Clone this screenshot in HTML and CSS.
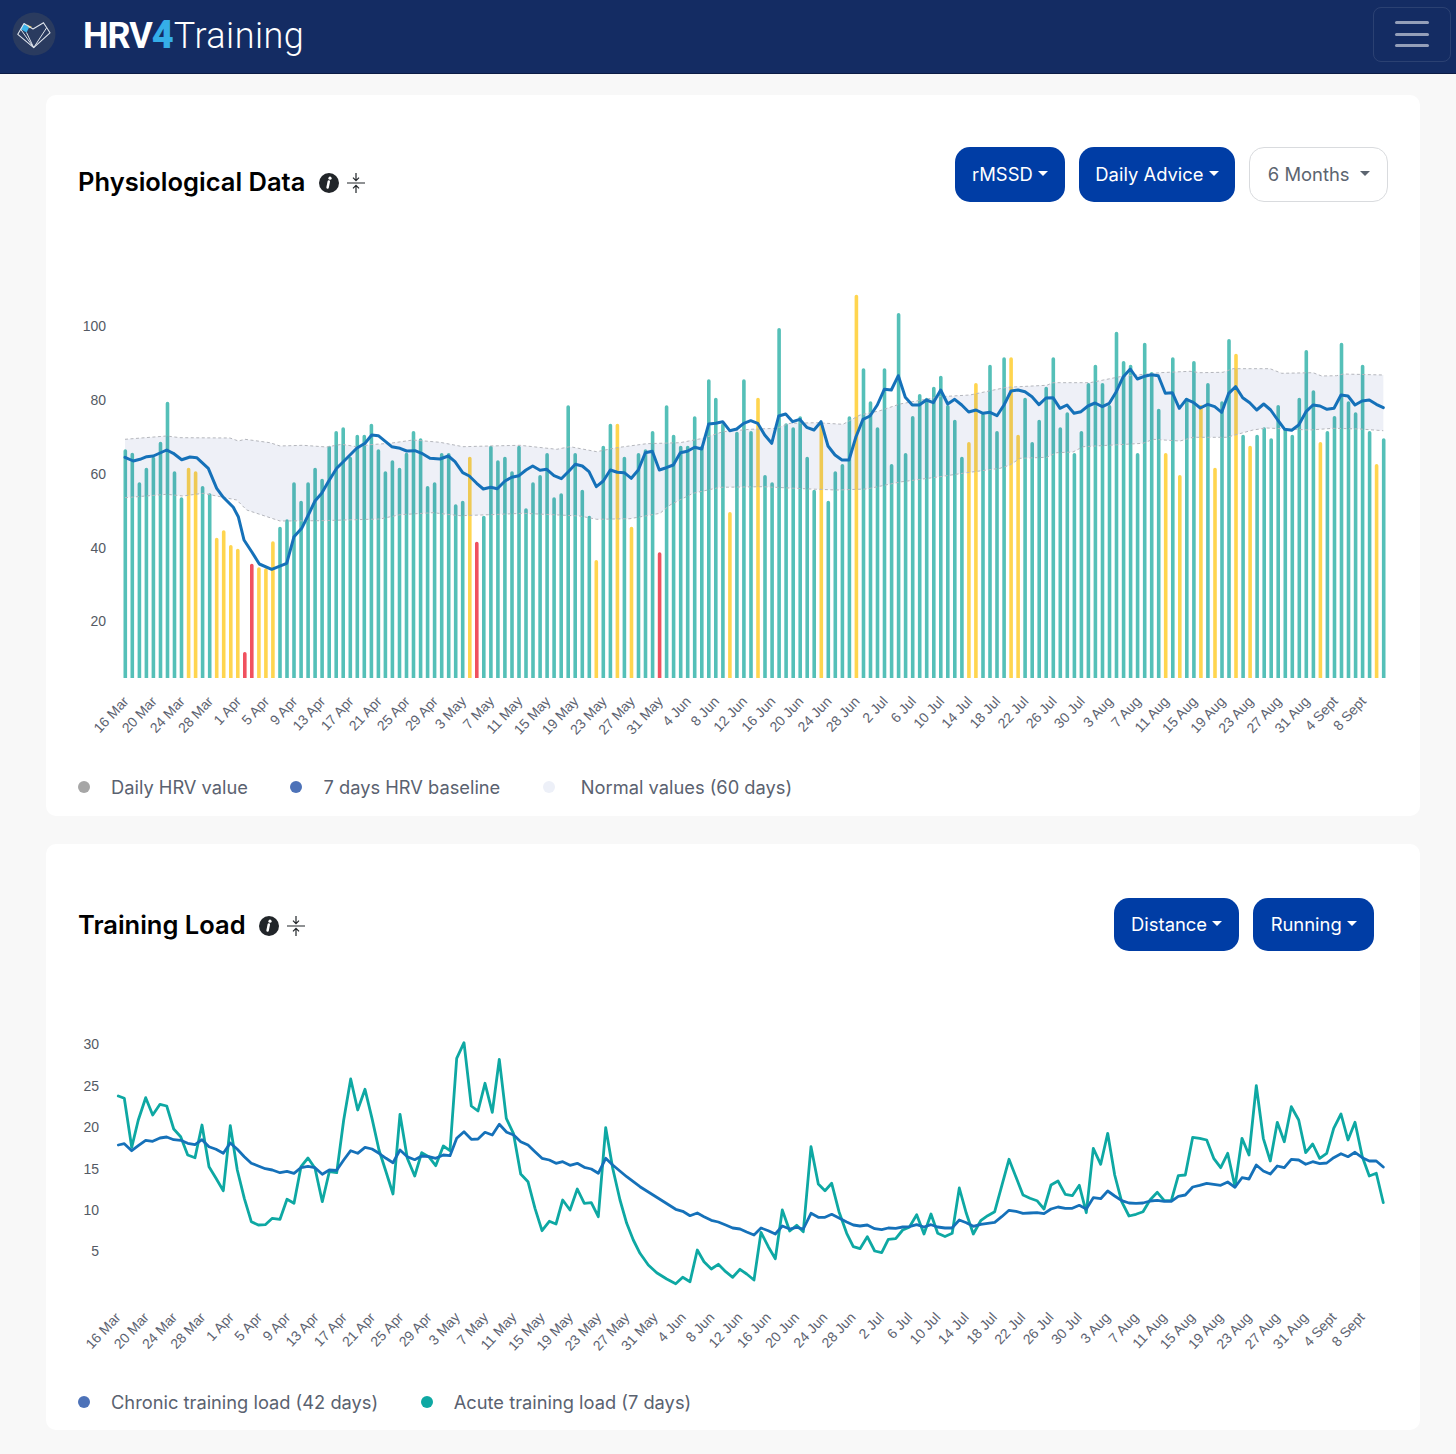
FILE: index.html
```html
<!DOCTYPE html>
<html lang="en">
<head>
<meta charset="utf-8">
<title>HRV4Training</title>
<link rel="stylesheet" href="styles.css">
</head>
<body>
<nav class="navbar">
  <a class="brand">
    <svg class="logo" viewBox="0 0 68 68" width="68" height="68">
      <circle cx="34" cy="34" r="21.5" fill="#2a3b5f"/>
      <path d="M24 23.5L29.2 27.2L26.5 32.5L20.5 29Z" fill="#3cb4ea"/>
      <path d="M27 24.5L32 27L29.5 28.2L28 26.5Z" fill="#f6c945"/>
      <path d="M24 23.5L17.8 34.3L33.7 47.6L50 32.8L43.5 22.7L33 29L24 23.5Z" fill="none" stroke="#dfe4ec" stroke-width="1.1" stroke-linejoin="round"/>
      <path d="M20.5 29L33.7 47.6L46.5 28M26.5 32.5L33.7 47.6" fill="none" stroke="#dfe4ec" stroke-width="1"/>
    </svg>
    <span class="brand-name"><b>HRV</b><b class="four">4</b>Training</span>
  </a>
  <button class="toggler" type="button" aria-label="Menu"><span></span><span></span><span></span></button>
</nav>

<main class="page">
  <section class="card card-a">
    <header class="card-head">
      <div class="title-group">
        <h2>Physiological Data</h2>
        <svg class="icon" viewBox="0 0 20 20" width="20" height="20"><circle cx="10" cy="10" r="10" fill="#212529"/><circle cx="11" cy="5.2" r="1.6" fill="#fff"/><path d="M9.8 8.5L8.6 14.6" stroke="#fff" stroke-width="2.5" stroke-linecap="round"/></svg>
        <svg class="icon" viewBox="0 0 18 20" width="18" height="20"><path d="M0 10H18M9 0V7M6 4.6L9 7.6L12 4.6M9 20V13M6 15.4L9 12.4L12 15.4" fill="none" stroke="#212529" stroke-width="1.2"/></svg>
      </div>
      <div class="btn-group">
        <button class="btn primary" type="button">rMSSD<i class="caret"></i></button>
        <button class="btn primary" type="button">Daily Advice<i class="caret"></i></button>
        <button class="btn outline" type="button">6 Months<i class="caret wide"></i></button>
      </div>
    </header>
    <svg class="chart chart-a" viewBox="46 202 1374 558" width="1374" height="558">
      <defs><clipPath id="plot-a"><rect x="100" y="250" width="1300" height="428"/></clipPath></defs>
      <g clip-path="url(#plot-a)">
        <g transform="translate(0 1.8)">
          <path class="bar teal" d="M125.3 690V449.3M132.3 690V452.7M139.4 690V482.3M146.4 690V467.7M153.4 690V456.7M160.5 690V441.7M167.5 690V401.7M174.5 690V471.3M181.5 690V497.3M202.6 690V486M209.7 690V493.3M280 690V526.7M287 690V519.3M294 690V482.3M301.1 690V500.7M308.1 690V482.3M315.1 690V467.7M322.1 690V478.7M329.2 690V445.7M336.2 690V431M343.2 690V427.3M350.3 690V456.7M357.3 690V434.7M364.3 690V434.7M371.4 690V423.7M378.4 690V449.3M385.4 690V471.3M392.4 690V460.3M399.5 690V467.7M406.5 690V452.7M413.5 690V431M420.6 690V438.3M427.6 690V486M434.6 690V482.3M441.7 690V453M448.7 690V453M455.7 690V504.3M462.7 690V500.7M483.8 690V515.7M490.9 690V445.7M497.9 690V460.3M504.9 690V456.7M512 690V471.3M519 690V445.7M526 690V508.3M533 690V482.3M540.1 690V475M547.1 690V453M554.1 690V497.3M561.2 690V493.3M568.2 690V405.3M575.2 690V453M582.3 690V489.7M589.3 690V515.7M603.3 690V445.7M610.4 690V423.7M624.4 690V456.7M638.5 690V453M645.5 690V449.3M652.6 690V431M666.6 690V405.3M673.6 690V434.7M680.7 690V445.7M687.7 690V445.7M694.7 690V416.3M701.8 690V445.7M708.8 690V379.3M715.8 690V397.7M722.9 690V423.3M736.9 690V431.7M743.9 690V379.3M751 690V431M765 690V475M772.1 690V482.3M779.1 690V328M786.1 690V423.3M793.2 690V427.3M800.2 690V416.3M807.2 690V456.7M814.2 690V489.7M828.3 690V500.7M835.3 690V471.3M842.4 690V464M849.4 690V416.3M863.5 690V368.3M870.5 690V401.3M877.5 690V427.3M884.5 690V368.3M891.6 690V464M898.6 690V313M905.6 690V453M912.7 690V416M919.7 690V394M926.7 690V397.7M933.8 690V386.7M940.8 690V375.7M947.8 690V405M954.8 690V419.7M961.9 690V456.7M983 690V413.3M990 690V364.7M997 690V431M1004.1 690V357.3M1025.1 690V397.7M1032.2 690V442M1039.2 690V419.7M1046.2 690V386.7M1053.3 690V357.3M1060.3 690V427.3M1067.3 690V412.3M1074.4 690V453M1081.4 690V431M1088.4 690V383M1095.4 690V364.7M1102.5 690V383M1109.5 690V405M1116.5 690V331.7M1123.6 690V361M1130.6 690V364.7M1137.6 690V453M1144.7 690V342.7M1151.7 690V372M1158.7 690V408.7M1172.8 690V357.3M1186.8 690V397.7M1193.9 690V361M1207.9 690V383M1222 690V401.3M1229 690V339M1243.1 690V434.7M1257.1 690V434.7M1264.2 690V427.3M1271.2 690V438.3M1278.2 690V405M1285.3 690V428M1292.3 690V434.7M1299.3 690V397.7M1306.3 690V350M1313.4 690V390.3M1327.4 690V431M1334.5 690V416M1341.5 690V342.7M1348.5 690V401.3M1355.6 690V412.3M1362.6 690V364.7M1369.6 690V431M1383.7 690V438.3"/>
          <path class="bar yellow" d="M188.6 690V467.7M195.6 690V471.3M216.7 690V537.7M223.7 690V530.3M230.8 690V545M237.8 690V548.7M258.9 690V567.3M265.9 690V568.3M272.9 690V541.3M469.8 690V456.7M596.3 690V560M617.4 690V423.7M631.5 690V526.7M729.9 690V512M758 690V397.7M821.3 690V423.3M856.4 690V294.7M968.9 690V442M975.9 690V383M1011.1 690V357.3M1018.1 690V434.7M1165.7 690V453M1179.8 690V475M1200.9 690V405M1215 690V467.7M1236 690V353.7M1250.1 690V445.7M1320.4 690V442M1376.6 690V464"/>
          <path class="bar red" d="M244.8 690V652M251.8 690V563.7M476.8 690V541.7M659.6 690V552.3"/>
        </g>
      </g>
      <path class="band" d="M125 439.3L166.7 436L180 437.7L230 438L238.3 441L245 439.3L270 442.7L280 446L303 445.3L326.7 447L341.7 444.3L356.7 446.7L370 444.7L390 443.3L413 440L440 442.3L463 446.7L490 446L520 445.3L556.7 449.3L570 446.7L596.7 451.7L616.7 447.7L646.7 443.7L680 442.7L703 438.3L723 431.7L750 429.3L776.7 428.3L790 423.3L816.7 422.7L843 424.3L860 415L880 410.7L900 404L940 396.7L970 395L1006.7 387.3L1046.7 385.3L1053 382.7L1090 382.7L1120 376.7L1160 372.7L1190 371.3L1200 372.7L1223 372.3L1233 368.7L1270 368.7L1281.7 373.3L1313 372.7L1321.7 376L1336.7 375.7L1343 374L1383.3 375L1383.3 430.7L1360 429L1333 428.3L1310 430L1266.7 428L1253 430L1226.7 437.3L1193 437.3L1180 441L1153 439.3L1143 443.3L1083 446.7L1073 452L1056.7 452.7L1046.7 457.3L1020 458.3L1010 465L1000 468.3L966.7 472.7L940 476.7L900 482L866.7 489L836.7 490L810 489L763 486.7L720 487.3L693 493.3L670 505L660 513.3L630 518.7L596.7 519.3L580 516L523 513.3L490 514.7L460 515.7L433 512.7L400 514.7L380 519L320 520.7L280 521L246.7 510L236.7 500L203 493.3L183 496L166.7 494.3L125 497.7Z"/>
      <polyline class="dash" points="125,439.3 166.7,436 180,437.7 230,438 238.3,441 245,439.3 270,442.7 280,446 303,445.3 326.7,447 341.7,444.3 356.7,446.7 370,444.7 390,443.3 413,440 440,442.3 463,446.7 490,446 520,445.3 556.7,449.3 570,446.7 596.7,451.7 616.7,447.7 646.7,443.7 680,442.7 703,438.3 723,431.7 750,429.3 776.7,428.3 790,423.3 816.7,422.7 843,424.3 860,415 880,410.7 900,404 940,396.7 970,395 1006.7,387.3 1046.7,385.3 1053,382.7 1090,382.7 1120,376.7 1160,372.7 1190,371.3 1200,372.7 1223,372.3 1233,368.7 1270,368.7 1281.7,373.3 1313,372.7 1321.7,376 1336.7,375.7 1343,374 1383.3,375"/>
      <polyline class="dash" points="125,497.7 166.7,494.3 183,496 203,493.3 236.7,500 246.7,510 280,521 320,520.7 380,519 400,514.7 433,512.7 460,515.7 490,514.7 523,513.3 580,516 596.7,519.3 630,518.7 660,513.3 670,505 693,493.3 720,487.3 763,486.7 810,489 836.7,490 866.7,489 900,482 940,476.7 966.7,472.7 1000,468.3 1010,465 1020,458.3 1046.7,457.3 1056.7,452.7 1073,452 1083,446.7 1143,443.3 1153,439.3 1180,441 1193,437.3 1226.7,437.3 1253,430 1266.7,428 1310,430 1333,428.3 1360,429 1383.3,430.7"/>
      <polyline class="line blue thick" points="125,457.3 133.3,461 140,459.3 146.7,456.7 153.3,456 166.7,450 173.3,453.3 181.7,459.7 190,457 196.7,457.7 208.3,468.3 216.7,488.3 223.3,497.3 233.3,507.3 238.3,516.7 244,540 251.7,551.7 259.3,564 271.7,569.3 286.7,563.3 294,536.7 301.7,528.3 308.3,515 315,501 321.7,493.3 328.3,481.7 336.7,468.3 343.3,461.7 356.7,448.3 365,443.3 371.7,435 378.3,435.7 391.7,446.7 400,448.3 406.7,451 415,450.7 421.7,453.3 430,458.3 440,459 448.3,456 455,461.7 462.7,472.7 469.3,476 476.7,483.3 483.3,489 490.7,487.3 497.3,488.7 505,481 511.7,477.3 519,475.7 526,470 532.7,466 540,470.3 546.7,469.3 554,475.7 561.3,478.7 568.3,471.7 575.3,464.3 582.3,466 589,471.7 596.3,486.7 603.3,481 610.3,470 617.3,472.3 624.3,472.7 631.3,478.3 638.3,470 645.3,452.7 652.3,451.3 659.3,470 666.3,467.7 673.3,465 680.3,452.7 687.3,451.3 694.7,447.3 701.7,449 708.7,424 715.7,423.3 722.7,421.7 729.7,430.7 736.7,429 743.7,423.3 750.7,420.7 757.7,423.3 764.7,435 771.7,443.3 778.7,416 785.7,414 792.7,421.7 799.7,419.3 806.7,427.3 814,430 821,421.7 828,446 835,455 842,460 849,460 856,436.7 863,419.3 870,416 877.3,405 884.3,389.3 891.3,390 898.3,375.7 905.3,397.3 912.3,405 919.3,405 926.3,400 933.3,402.7 940.7,390 947.7,404 954.7,399.3 961.7,405 968.7,412 976,410 983,413.3 990,412.3 997,415.7 1004,405 1011,391 1018,390 1025,391.7 1032,396.7 1039,404.7 1046,398 1053,397.7 1060,408.3 1067,405 1074,413.3 1081,411.7 1088,406 1095,403 1102.3,406.7 1109.3,403.3 1116.3,391.7 1123.3,376.7 1130.3,369 1137.3,379 1144.3,376.3 1151.3,374.7 1158.3,375.7 1165.3,393.3 1172.3,392.7 1179.3,408.3 1186.3,399.3 1193.3,402.3 1200.3,408 1207.7,404.3 1214.7,406.7 1221.7,412.3 1228.7,393.3 1235.7,386.7 1242.7,397.7 1249.7,402.7 1256.7,410 1263.7,404 1270.7,410 1277.7,420 1284.7,429.3 1291.7,430.3 1298.7,425 1306,411.7 1313,405 1320,406 1327,409.3 1334,408.3 1341,395 1348,396 1355,405 1362,401 1369.3,400 1376.3,404.3 1383.3,407.7"/>
      <g class="ylabels">
        <text x="106" y="331">100</text><text x="106" y="405">80</text><text x="106" y="479">60</text><text x="106" y="553">40</text><text x="106" y="626">20</text>
      </g>
      <g class="xlabels">
        <text transform="translate(129.5 702) rotate(-47)">16 Mar</text><text transform="translate(157.6 702) rotate(-47)">20 Mar</text><text transform="translate(185.7 702) rotate(-47)">24 Mar</text><text transform="translate(213.9 702) rotate(-47)">28 Mar</text><text transform="translate(242 702) rotate(-47)">1 Apr</text><text transform="translate(270.1 702) rotate(-47)">5 Apr</text><text transform="translate(298.2 702) rotate(-47)">9 Apr</text><text transform="translate(326.3 702) rotate(-47)">13 Apr</text><text transform="translate(354.5 702) rotate(-47)">17 Apr</text><text transform="translate(382.6 702) rotate(-47)">21 Apr</text><text transform="translate(410.7 702) rotate(-47)">25 Apr</text><text transform="translate(438.8 702) rotate(-47)">29 Apr</text><text transform="translate(466.9 702) rotate(-47)">3 May</text><text transform="translate(495.1 702) rotate(-47)">7 May</text><text transform="translate(523.2 702) rotate(-47)">11 May</text><text transform="translate(551.3 702) rotate(-47)">15 May</text><text transform="translate(579.4 702) rotate(-47)">19 May</text><text transform="translate(607.5 702) rotate(-47)">23 May</text><text transform="translate(635.7 702) rotate(-47)">27 May</text><text transform="translate(663.8 702) rotate(-47)">31 May</text><text transform="translate(691.9 702) rotate(-47)">4 Jun</text><text transform="translate(720 702) rotate(-47)">8 Jun</text><text transform="translate(748.1 702) rotate(-47)">12 Jun</text><text transform="translate(776.3 702) rotate(-47)">16 Jun</text><text transform="translate(804.4 702) rotate(-47)">20 Jun</text><text transform="translate(832.5 702) rotate(-47)">24 Jun</text><text transform="translate(860.6 702) rotate(-47)">28 Jun</text><text transform="translate(888.7 702) rotate(-47)">2 Jul</text><text transform="translate(916.9 702) rotate(-47)">6 Jul</text><text transform="translate(945 702) rotate(-47)">10 Jul</text><text transform="translate(973.1 702) rotate(-47)">14 Jul</text><text transform="translate(1001.2 702) rotate(-47)">18 Jul</text><text transform="translate(1029.3 702) rotate(-47)">22 Jul</text><text transform="translate(1057.5 702) rotate(-47)">26 Jul</text><text transform="translate(1085.6 702) rotate(-47)">30 Jul</text><text transform="translate(1113.7 702) rotate(-47)">3 Aug</text><text transform="translate(1141.8 702) rotate(-47)">7 Aug</text><text transform="translate(1169.9 702) rotate(-47)">11 Aug</text><text transform="translate(1198.1 702) rotate(-47)">15 Aug</text><text transform="translate(1226.2 702) rotate(-47)">19 Aug</text><text transform="translate(1254.3 702) rotate(-47)">23 Aug</text><text transform="translate(1282.4 702) rotate(-47)">27 Aug</text><text transform="translate(1310.5 702) rotate(-47)">31 Aug</text><text transform="translate(1338.7 702) rotate(-47)">4 Sept</text><text transform="translate(1366.8 702) rotate(-47)">8 Sept</text>
      </g>
    </svg>
    <ul class="legend legend-a">
      <li><i class="dot grey"></i>Daily HRV value</li>
      <li><i class="dot navy"></i>7 days HRV baseline</li>
      <li class="wide-gap"><i class="dot pale"></i>Normal values (60 days)</li>
    </ul>
  </section>

  <section class="card card-b">
    <header class="card-head">
      <div class="title-group">
        <h2>Training Load</h2>
        <svg class="icon" viewBox="0 0 20 20" width="20" height="20"><circle cx="10" cy="10" r="10" fill="#212529"/><circle cx="11" cy="5.2" r="1.6" fill="#fff"/><path d="M9.8 8.5L8.6 14.6" stroke="#fff" stroke-width="2.5" stroke-linecap="round"/></svg>
        <svg class="icon" viewBox="0 0 18 20" width="18" height="20"><path d="M0 10H18M9 0V7M6 4.6L9 7.6L12 4.6M9 20V13M6 15.4L9 12.4L12 15.4" fill="none" stroke="#212529" stroke-width="1.2"/></svg>
      </div>
      <div class="btn-group">
        <button class="btn primary" type="button">Distance<i class="caret"></i></button>
        <button class="btn primary" type="button">Running<i class="caret"></i></button>
      </div>
    </header>
    <svg class="chart chart-b" viewBox="46 951 1374 424" width="1374" height="424">
      <polyline class="line teal-line" points="118.3,1096 124.3,1098.3 131.7,1147.3 138.3,1120 145.7,1097.7 152.7,1115 160,1104.3 166.7,1106 173.7,1129 180.7,1136.7 187.7,1155 195,1157.7 202,1125 209,1166.7 216,1178.3 223.3,1190.7 230.3,1125.7 237.3,1170 244.3,1198.3 251.3,1221.7 258.3,1225 265.3,1224.7 272.3,1218.3 280,1219.3 287,1199.3 294,1203.3 301,1166.7 308,1158 315,1168.3 322.3,1201.7 329.3,1171.7 336.7,1172.7 343.7,1120 350.7,1079 357.7,1110 365,1089.3 372,1118.3 379,1150 386,1171.7 393,1194 400,1114.3 407.3,1158.3 414.7,1176 421.7,1152.7 428.7,1156.7 435.7,1165.7 443.3,1146 450,1150.7 456.7,1058.3 464,1042.7 471.3,1106 478,1111 485,1083.3 492.3,1112.3 499.3,1059.3 506.3,1118.3 513.5,1133.7 520.7,1174 528,1181.7 535,1208.3 542,1230.7 549.3,1221.3 556,1224 562.7,1200 570,1210 577.3,1189 584.3,1203.3 591.3,1202.7 598.3,1216.7 605.7,1127.7 612.7,1168.3 620,1200 626.7,1223.3 633.3,1240 640,1253.3 648.3,1265 656.7,1272.7 666.7,1279 675.7,1283.7 682.7,1277.3 690,1281.7 697.3,1250 704,1261.7 711.3,1269 718.3,1264.3 725.7,1271.7 732.7,1277.3 740,1269.3 746.7,1274 754,1280 761,1232.3 768.3,1246.7 775.3,1258.7 782.3,1210 789.7,1231 796.7,1225.3 803.3,1231.7 811,1146.7 818.3,1184 825,1190.7 831.7,1183.3 839,1211.7 846.7,1233.3 853.3,1246.7 860,1248.7 867.3,1236.7 874.7,1251 881.7,1252.7 888.3,1239.3 895.7,1238.7 902.7,1230 909.3,1227.3 916.7,1214.7 924,1234 931,1214 937.7,1233.3 945,1236.5 952.2,1233.3 959.3,1188 966.3,1213.3 973.3,1234 980.7,1220.7 987.7,1215.7 994.7,1211.7 1009,1159.3 1023,1195 1030,1198.3 1037,1200.7 1044,1209 1051,1185 1058,1181 1065.3,1194.3 1072.3,1195.7 1079.3,1185.3 1086.3,1212.7 1093.3,1148.3 1100.7,1164.3 1107.7,1133.3 1114.7,1175 1121.7,1201.7 1129,1216 1136,1214.3 1143,1211.7 1150,1200 1157.3,1192.3 1164.3,1200.7 1171.3,1200.7 1178.3,1175.7 1185.3,1175 1192.7,1137.3 1199.7,1138.3 1206.7,1140 1213.7,1158.3 1220.7,1167.7 1227.7,1153.3 1235,1186.7 1242,1138.3 1249,1155 1256.3,1085.7 1263.3,1138.3 1270.3,1161 1277.3,1122.3 1284.3,1141.7 1291.3,1106.7 1298.7,1120 1305.7,1152.7 1312.7,1144 1319.7,1158.3 1326.7,1153.3 1333.7,1128.3 1341,1114 1348,1140 1355,1122.3 1362.3,1156.7 1369.3,1176 1376.3,1173.3 1383.3,1202.7"/>
      <polyline class="line blue" points="118.3,1145 124.3,1143.7 131.7,1150.7 138.3,1145.7 145.7,1140.3 152.7,1141.3 160,1138 166.7,1137 173.7,1139.7 180.7,1140.3 187.7,1143.3 195,1144.7 202,1139.7 209,1146.7 216,1149.3 223.3,1153.3 230.3,1143 237.3,1149.3 244.3,1156.7 251.3,1163.3 258.3,1166 265.3,1168.7 272.3,1170 280,1172.7 287,1171.3 294,1173.3 301,1167.7 308,1166.3 315,1167.7 322.3,1174.3 329.3,1170 336.7,1170.3 343.7,1160 350.7,1150.7 357.7,1153.3 365,1147.3 372,1149 379,1153.3 386,1158.3 393,1162.7 400,1150 407.3,1156.7 414.7,1159.7 421.7,1156 428.7,1156.7 435.7,1158.3 443.3,1155 450,1155.7 456.7,1138.3 464,1131.7 471.3,1139.3 478,1139 485,1132.3 492.3,1135 499.3,1124.3 506.7,1132.3 513.7,1135 520.7,1141.7 528,1145 535,1151.7 542,1158.3 549.3,1160 556,1163.3 562.7,1161.7 570,1165.3 577.3,1163.3 584.3,1167.3 591.3,1169 598.3,1173.3 605.7,1158.3 612.7,1165 626.7,1176.7 640,1186.7 656.7,1197.3 675.7,1209.3 682.7,1211.3 690,1215.7 697.3,1213 704,1216.7 711.3,1220.3 718.3,1222 725.7,1225 732.7,1228 740,1229 746.7,1232 754,1235 761,1228 768.3,1230.7 775.3,1234 782.3,1226 789.7,1229 796.7,1227.3 803.3,1229 811,1213.3 818.3,1217.3 825,1217.3 831.7,1214.3 839,1218 846.7,1222 853.3,1225 860,1226 867.3,1225 874.7,1228.7 881.7,1229.7 888.3,1228 895.7,1228.3 902.7,1227 909.3,1226.7 916.7,1224.7 924,1227 931,1224.7 937.7,1227 945,1228 952,1228 959.3,1220 966.3,1222.7 973.3,1226.3 980.7,1224.3 987.7,1223.3 994.7,1222.3 1001.7,1216.7 1009,1210.3 1016,1211.3 1023,1213.3 1030,1213 1037,1212.7 1044,1213.7 1051,1209 1058,1207 1065.3,1208.3 1072.3,1208.3 1079.3,1205.3 1086.3,1209 1093.3,1197.7 1100.7,1198.7 1107.7,1191 1114.7,1196 1121.7,1200.7 1129,1203 1136,1203.3 1143,1203 1150,1201 1157.3,1200.3 1164.3,1201.3 1171.3,1201.3 1178.3,1196.3 1185.3,1195 1192.7,1187 1199.7,1185.3 1206.7,1183.3 1213.7,1184.3 1220.7,1185.3 1227.7,1182 1235,1187.3 1242,1177.7 1249,1179 1256.3,1165 1263.3,1171 1270.3,1174 1277.3,1166 1284.3,1167.7 1291.3,1159.3 1298.7,1160 1305.7,1164.3 1312.7,1161.7 1319.7,1163.7 1326.7,1163 1333.7,1157.7 1341,1153.7 1348,1156.7 1355,1152.3 1362.3,1157.7 1369.3,1161 1376.3,1161 1383.3,1167"/>
      <g class="ylabels">
        <text x="99" y="1049">30</text><text x="99" y="1090.5">25</text><text x="99" y="1132">20</text><text x="99" y="1173.5">15</text><text x="99" y="1215">10</text><text x="99" y="1256">5</text>
      </g>
      <g class="xlabels">
        <text transform="translate(121.5 1318) rotate(-47)">16 Mar</text><text transform="translate(149.8 1318) rotate(-47)">20 Mar</text><text transform="translate(178 1318) rotate(-47)">24 Mar</text><text transform="translate(206.3 1318) rotate(-47)">28 Mar</text><text transform="translate(234.6 1318) rotate(-47)">1 Apr</text><text transform="translate(262.9 1318) rotate(-47)">5 Apr</text><text transform="translate(291.1 1318) rotate(-47)">9 Apr</text><text transform="translate(319.4 1318) rotate(-47)">13 Apr</text><text transform="translate(347.7 1318) rotate(-47)">17 Apr</text><text transform="translate(375.9 1318) rotate(-47)">21 Apr</text><text transform="translate(404.2 1318) rotate(-47)">25 Apr</text><text transform="translate(432.5 1318) rotate(-47)">29 Apr</text><text transform="translate(460.7 1318) rotate(-47)">3 May</text><text transform="translate(489 1318) rotate(-47)">7 May</text><text transform="translate(517.3 1318) rotate(-47)">11 May</text><text transform="translate(545.6 1318) rotate(-47)">15 May</text><text transform="translate(573.8 1318) rotate(-47)">19 May</text><text transform="translate(602.1 1318) rotate(-47)">23 May</text><text transform="translate(630.4 1318) rotate(-47)">27 May</text><text transform="translate(658.6 1318) rotate(-47)">31 May</text><text transform="translate(686.9 1318) rotate(-47)">4 Jun</text><text transform="translate(715.2 1318) rotate(-47)">8 Jun</text><text transform="translate(743.4 1318) rotate(-47)">12 Jun</text><text transform="translate(771.7 1318) rotate(-47)">16 Jun</text><text transform="translate(800 1318) rotate(-47)">20 Jun</text><text transform="translate(828.3 1318) rotate(-47)">24 Jun</text><text transform="translate(856.5 1318) rotate(-47)">28 Jun</text><text transform="translate(884.8 1318) rotate(-47)">2 Jul</text><text transform="translate(913.1 1318) rotate(-47)">6 Jul</text><text transform="translate(941.3 1318) rotate(-47)">10 Jul</text><text transform="translate(969.6 1318) rotate(-47)">14 Jul</text><text transform="translate(997.9 1318) rotate(-47)">18 Jul</text><text transform="translate(1026.1 1318) rotate(-47)">22 Jul</text><text transform="translate(1054.4 1318) rotate(-47)">26 Jul</text><text transform="translate(1082.7 1318) rotate(-47)">30 Jul</text><text transform="translate(1111 1318) rotate(-47)">3 Aug</text><text transform="translate(1139.2 1318) rotate(-47)">7 Aug</text><text transform="translate(1167.5 1318) rotate(-47)">11 Aug</text><text transform="translate(1195.8 1318) rotate(-47)">15 Aug</text><text transform="translate(1224 1318) rotate(-47)">19 Aug</text><text transform="translate(1252.3 1318) rotate(-47)">23 Aug</text><text transform="translate(1280.6 1318) rotate(-47)">27 Aug</text><text transform="translate(1308.8 1318) rotate(-47)">31 Aug</text><text transform="translate(1337.1 1318) rotate(-47)">4 Sept</text><text transform="translate(1365.4 1318) rotate(-47)">8 Sept</text>
      </g>
    </svg>
    <ul class="legend legend-b">
      <li><i class="dot navy"></i>Chronic training load (42 days)</li>
      <li><i class="dot teal-dot"></i>Acute training load (7 days)</li>
    </ul>
  </section>
</main>
</body>
</html>
```

FILE: styles.css
```css
* { box-sizing: border-box; }
html, body { margin: 0; padding: 0; }
body {
  background: #f8f8f8;
  font-family: Inter, "Liberation Sans", sans-serif;
  color: #000;
  min-height: 1454px;
}

.navbar {
  height: 74px;
  background: #142c63;
  border-bottom: 1px solid #0c1c45;
  display: flex;
  align-items: center;
  justify-content: space-between;
  padding: 0 5px 5px 0;
}
.brand { display: flex; align-items: center; }
.logo { display: block; flex: none; }
.brand-name {
  margin-left: 15px;
  padding-top: 1px;
  font-family: Roboto, "Liberation Sans", sans-serif;
  font-size: 36px;
  font-weight: 300;
  color: #fff;
  letter-spacing: 0.5px;
  line-height: 1;
}
.brand-name b { font-weight: 700; letter-spacing: -1px; }
.brand-name .four { color: #35aee8; font-weight: 900; font-size: 38px; letter-spacing: 0; }
.toggler {
  width: 78px;
  height: 55px;
  background: transparent;
  border: 1px solid rgba(255, 255, 255, 0.1);
  border-radius: 8px;
  display: flex;
  flex-direction: column;
  align-items: center;
  justify-content: center;
  gap: 8.5px;
  padding: 0;
}
.toggler span {
  display: block;
  width: 34px;
  height: 3px;
  border-radius: 1.5px;
  background: #949fb9;
}

.page { padding: 21px 36px 24px 46px; }
.card {
  background: #fff;
  border-radius: 10px;
  height: 721px;
  padding-top: 52px;
  margin-bottom: 28px;
}
.card-b { height: 586px; padding-top: 54px; margin-bottom: 0; }

.card-head {
  display: flex;
  align-items: center;
  justify-content: space-between;
  padding: 0 32px;
}
.card-b .card-head { padding-right: 46px; }
.title-group { display: flex; align-items: center; padding-top: 2px; }
.card-a .title-group { padding-top: 16px; }
.title-group h2 {
  margin: 0 13.5px 0 0;
  font-size: 25.5px;
  font-weight: 600;
  line-height: 1.2;
  color: #000;
}
.icon { display: block; flex: none; margin-right: 8px; }
.btn-group { display: flex; gap: 14px; }
.btn {
  height: 55px;
  border-radius: 15px;
  font-family: Inter, "Liberation Sans", sans-serif;
  font-size: 18.4px;
  font-weight: 400;
  padding: 0 15.8px 2px;
  display: flex;
  align-items: center;
  border: 1px solid transparent;
}
.card-b .btn { height: 53px; padding: 0 16.3px 2px; }
.btn.primary { background: #003da5; color: #fff; }
.btn.outline { background: #fff; color: #5c6570; border-color: #d9dbde; padding: 0 17.5px 2px; }
.caret {
  display: inline-block;
  margin-left: 5px;
  border-top: 5.5px solid currentColor;
  border-left: 5.5px solid transparent;
  border-right: 5.5px solid transparent;
}
.caret.wide { margin-left: 10px; }

.chart { display: block; }
.bar { fill: none; stroke-width: 3.6; stroke-linecap: round; }
.teal { stroke: #55c0b8; }
.yellow { stroke: #ffd54f; }
.red { stroke: #f0515f; }
.band { fill: rgba(40, 70, 150, 0.08); stroke: none; }
.dash { fill: none; stroke: #b5b7bd; stroke-width: 1; stroke-dasharray: 3 2.5; }
.line { fill: none; stroke-width: 2.8; stroke-linejoin: round; stroke-linecap: round; }
.blue { stroke: #1571b9; }
.thick { stroke-width: 3; }
.teal-line { stroke: #0ea8a3; }
.ylabels text {
  font-family: "Liberation Sans", sans-serif;
  font-size: 14px;
  fill: #545a64;
  text-anchor: end;
}
.xlabels text {
  font-family: "Liberation Sans", sans-serif;
  font-size: 14px;
  fill: #5c6270;
  text-anchor: end;
}

.legend {
  list-style: none;
  margin: 0;
  padding: 15px 0 0 32px;
  display: flex;
  gap: 42.5px;
  font-size: 18.3px;
  line-height: 24px;
  color: #5a6270;
}
.legend li { display: flex; align-items: center; }
.legend li.wide-gap .dot { margin-right: 26px; }
.dot {
  width: 12px;
  height: 12px;
  border-radius: 50%;
  margin-right: 21px;
  flex: none;
}
.grey { background: #a6a6a6; }
.navy { background: #4d72b8; }
.pale { background: #edf0f8; }
.teal-dot { background: #0ea8a3; }
```
